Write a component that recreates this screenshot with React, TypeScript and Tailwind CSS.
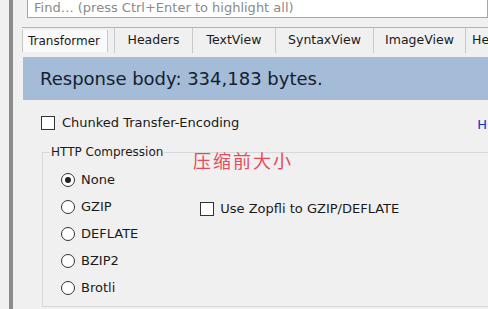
import React from "react";

const tabs = [
  { label: "Headers", w: "w-[78px]" },
  { label: "TextView", w: "w-[83px]" },
  { label: "SyntaxView", w: "w-[98px]" },
  { label: "ImageView", w: "w-[92px]" },
  { label: "Headers", w: "w-[60px]" },
];

function Checkbox() {
  return <span className="w-[14px] h-[14px] shrink-0 bg-white border border-[#333]" />;
}

function Radio({ checked }: { checked?: boolean }) {
  return (
    <span className="w-[14px] h-[14px] shrink-0 rounded-full bg-white border border-[#333] flex items-center justify-center">
      {checked && <span className="w-[6px] h-[6px] rounded-full bg-[#222]" />}
    </span>
  );
}

export default function App() {
  const radios = ["None", "GZIP", "DEFLATE", "BZIP2", "Brotli"];
  return (
    <div
      className="w-[488px] h-[309px] overflow-hidden bg-[#f0f0f0] flex text-[#1a1a1a]"
      style={{ fontFamily: '"DejaVu Sans", sans-serif' }}
    >
      <div className="w-[9px] shrink-0" />
      <div className="w-[4px] shrink-0 bg-[#8c8c8c]" />
      <div className="flex-1 flex flex-col min-w-0">
        {/* Find box */}
        <div className="ml-[14px] mt-[-3px] h-[21px] bg-white border border-[#a6a6a6] shrink-0 flex items-center pl-[6px] text-[13px] leading-none text-[#8a8a8a] whitespace-nowrap overflow-hidden">
          Find… (press Ctrl+Enter to highlight all)
        </div>

        {/* Tabs */}
        <div className="ml-[9px] mt-[9px] h-[26px] border-t border-[#b4b4b4] flex items-stretch shrink-0 overflow-hidden">
          <div className="w-[86px] shrink-0 mt-[2px] mb-[1px] bg-[#fafafa] border-x border-[#c8c8c8] flex items-center px-[5px] text-[12px] whitespace-nowrap">
            Transformer
          </div>
          <div className="w-[6px] shrink-0" />
          {tabs.map((t, i) => (
            <div
              key={i}
              className={`${t.w} shrink-0 border-l border-[#c8c8c8] flex items-center ${
                i === tabs.length - 1 ? "justify-start pl-[6px]" : "justify-center"
              } text-[12.5px] whitespace-nowrap overflow-hidden`}
            >
              {t.label}
            </div>
          ))}
        </div>

        {/* Banner */}
        <div className="ml-[10px] mt-[4px] h-[43px] bg-[#a4bcd8] flex items-center pl-[17px] shrink-0">
          <span className="text-[18px] text-[#14202e] whitespace-nowrap">Response body: 334,183 bytes.</span>
        </div>

        {/* Options panel */}
        <div className="ml-[10px] flex-1 relative">
          <div className="mt-[16px] ml-[18px] flex items-center gap-[7px] h-[14px]">
            <Checkbox />
            <span className="text-[13px] whitespace-nowrap">Chunked Transfer-Encoding</span>
          </div>
          <span className="absolute right-[1px] top-[15px] text-[13px] text-[#1030c8]">H</span>

          {/* Group box */}
          <div className="relative mt-[22px] ml-[19px] h-[155px] border border-[#d8d8d8] border-r-0">
            <span className="absolute left-[7px] top-[-10px] bg-[#f0f0f0] px-[1px] text-[12px] whitespace-nowrap">
              HTTP Compression
            </span>
            <span
              className="absolute left-[150px] top-[-6px] text-[18px] text-[#e8485a] tracking-[2px] whitespace-nowrap"
              style={{ fontFamily: '"Noto Sans CJK SC", sans-serif' }}
            >
              压缩前大小
            </span>

            <div className="flex">
              <div className="flex flex-col pt-[20px] pl-[18px] gap-[13px]">
                {radios.map((r, i) => (
                  <div key={r} className="flex items-center gap-[6px] h-[14px]">
                    <Radio checked={i === 0} />
                    <span className="text-[13px]">{r}</span>
                  </div>
                ))}
              </div>
              <div className="ml-[62px] mt-[49px] flex items-center gap-[6px] h-[14px]">
                <Checkbox />
                <span className="text-[13px] whitespace-nowrap">Use Zopfli to GZIP/DEFLATE</span>
              </div>
            </div>
          </div>
        </div>
      </div>
    </div>
  );
}
